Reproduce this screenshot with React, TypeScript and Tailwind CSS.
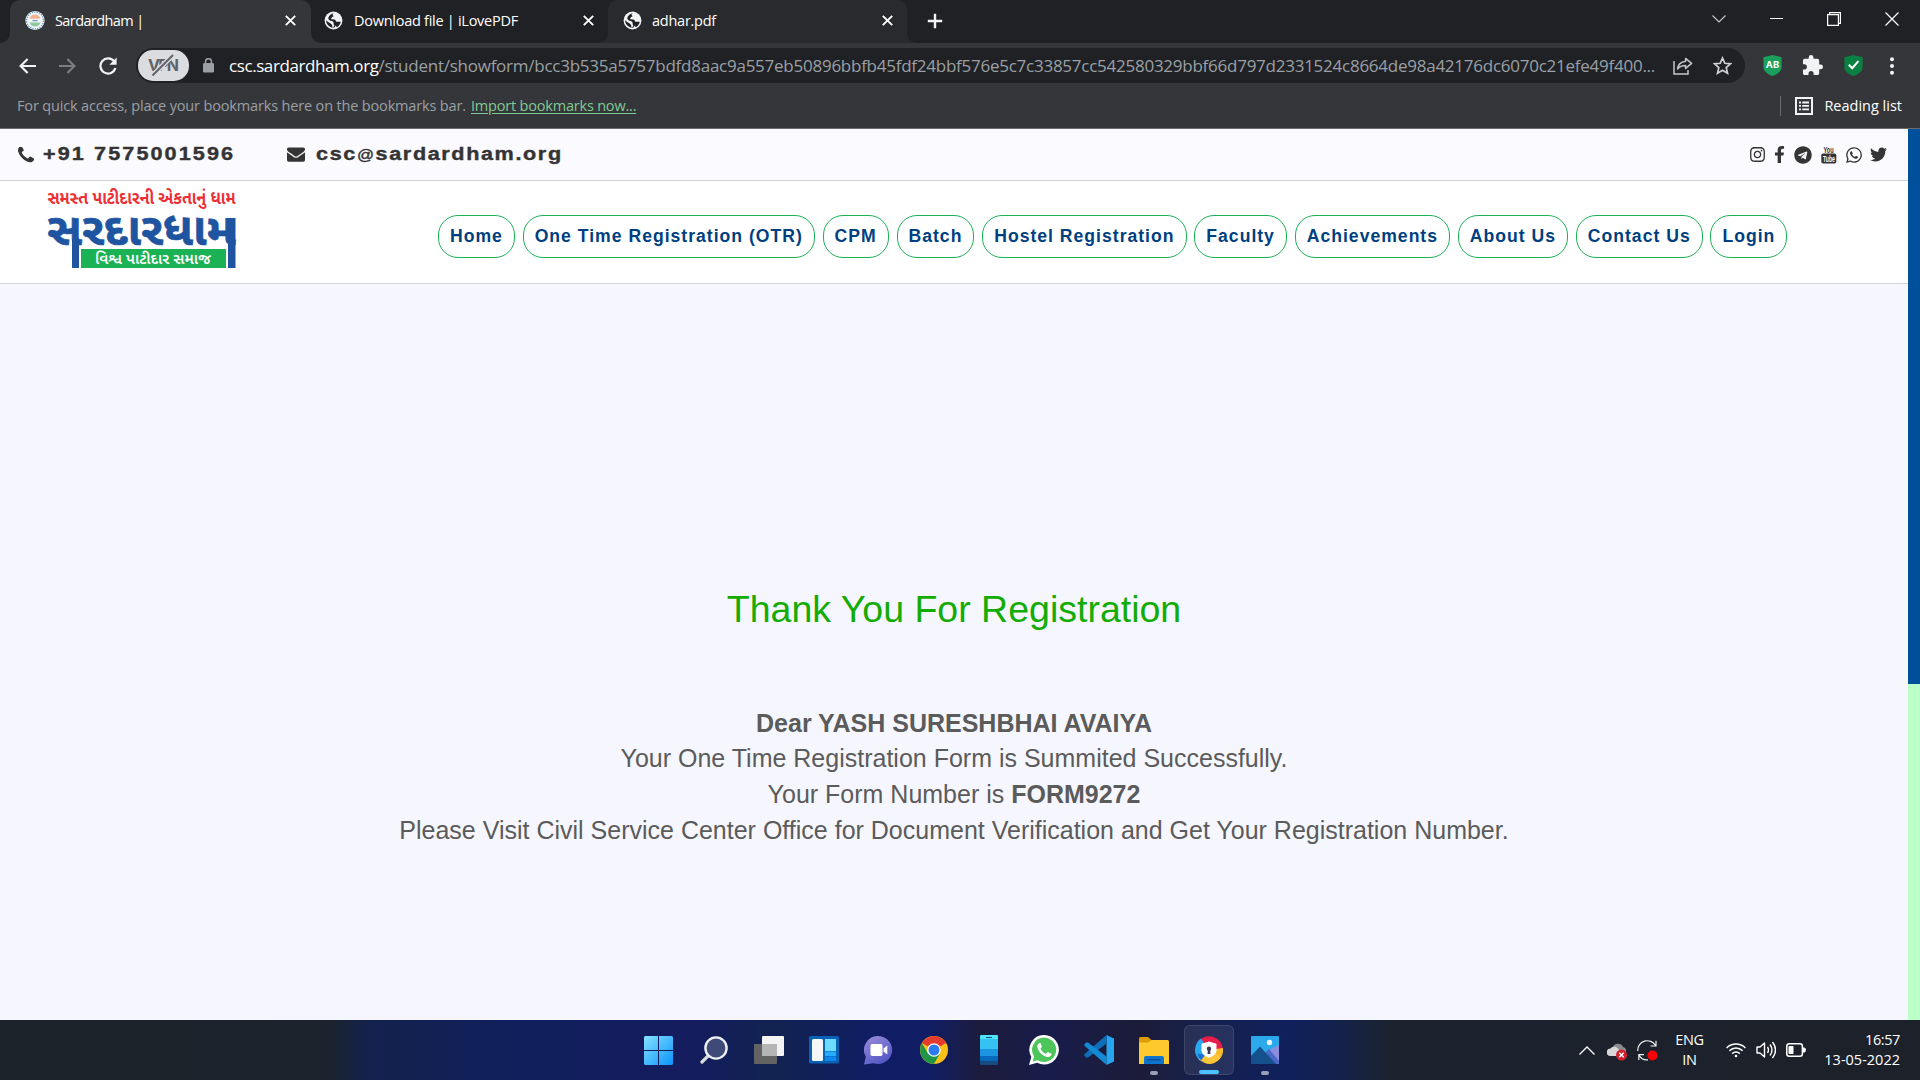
import type { ReactNode } from 'react';
import { FaFacebookF, FaInstagram, FaTelegram, FaTwitter, FaWhatsapp } from 'react-icons/fa';

function GlobeIcon() {
  return (
    <svg className="size-[19px] shrink-0" viewBox="0 0 20 20">
      <circle cx="10" cy="10" r="9.4" fill="#f1f3f4" />
      <path
        d="M10.6 2.2 C8.4 3.2 9 4.6 10.2 5.4 C8.4 6 7.4 7 7.6 8.6 L11 9 C12.4 9.3 12.4 11.2 13.8 11.8 C14.6 13.4 12.4 14.6 10.8 17.6 L9 17.8 C8.6 16 9 14.6 7.6 13.6 C5.8 12.4 3.6 11.4 2.2 9.8 C2.2 13 5 17.4 9.6 17.6 L10.8 15.4 C9.6 13.8 10.6 12.6 9.6 11.4 C8 10 5.4 10.4 4.6 8.4 C4.4 6.4 6 3.4 10.6 2.2 Z"
        fill="#202124"
      />
      <path d="M13.8 11.4 h3.8 c-.4 2.6-2 4.6-4 5.6 l-1.4-1.4z" fill="#202124" />
    </svg>
  );
}

function EmblemIcon() {
  return (
    <svg className="h-[21px] w-5 shrink-0" viewBox="0 0 20 20">
      <circle cx="10" cy="10" r="9.6" fill="#f4f8fa" />
      <circle cx="10" cy="10" r="8.4" fill="none" stroke="#6b9fc0" strokeWidth="1.3" strokeDasharray="1.4 1" />
      <path d="M4.600 8.200 a5.600 5.600 0 0 1 10.800 0z" fill="#f3b391" />
      <path d="M4.600 12 a5.600 5.600 0 0 0 10.800 0z" fill="#8fc79d" />
      <path d="M7.400 9.400h5.200v1.400H7.400z" fill="#7d98c4" />
    </svg>
  );
}

function CloseIcon() {
  return (
    <svg className="size-[11px] shrink-0" viewBox="0 0 11 11" stroke="#fff" strokeWidth="1.9">
      <path d="M.8.8l9.4 9.4M10.2.8L.8 10.2" />
    </svg>
  );
}

function TabStrip() {
  return (
    <div className="flex h-[43px] items-stretch bg-[#202124] text-[14.5px] text-white">
      <div className="w-[10px] shrink-0 bg-[#35363a]">
        <div className="h-full rounded-br-[10px] bg-[#202124]" />
      </div>
      <div className="flex w-[301px] items-center rounded-t-[10px] bg-[#35363a] pb-0.5 pl-[15px] pr-[15px]">
        <EmblemIcon />
        <span className="ml-[10px] grow tracking-[-0.6px]">Sardardham |</span>
        <CloseIcon />
      </div>
      <div className="w-[297px] shrink-0 bg-[linear-gradient(90deg,#35363a_50%,#292a2d_50%)]">
        <div className="flex h-full items-center rounded-b-[10px] bg-[#202124] pb-0.5 pl-[13px] pr-[14px]">
          <GlobeIcon />
          <span className="ml-[11px] grow tracking-[-0.27px]">Download file | iLovePDF</span>
          <CloseIcon />
        </div>
      </div>
      <div className="flex w-[299px] items-center rounded-t-[10px] bg-[#292a2d] pb-0.5 pl-[15px] pr-[14px]">
        <GlobeIcon />
        <span className="ml-[10px] grow tracking-[-0.25px]">adhar.pdf</span>
        <CloseIcon />
      </div>
      <div className="w-5 bg-[#292a2d]">
        <div className="h-full rounded-bl-[10px] bg-[#202124]" />
      </div>
      <svg className="mt-[13px] size-[16px] shrink-0" viewBox="0 0 16 16" stroke="#f1f3f4" strokeWidth="2.4">
        <path d="M8 .8v14.4M.8 8h14.4" />
      </svg>
      <div className="grow" />
      <div className="flex items-start gap-[44px] pr-[21.5px] pt-[12px]">
        <svg className="mt-[3px] h-2 w-[14px]" viewBox="0 0 14 8" fill="none" stroke="#c8c8c8" strokeWidth="1.1">
          <path d="M.5.5L7 7 13.5.5" />
        </svg>
        <svg className="h-[13px] w-[13px]" viewBox="0 0 13 13" stroke="#fff">
          <path d="M0 6.5h13" />
        </svg>
        <svg className="size-[14px]" viewBox="0 0 14 14" fill="none" stroke="#fff" strokeWidth="1.2">
          <path d="M.6 2.6h10.8v10.8H.6zM2.6 2.6V.6h10.8v10.8h-2" />
        </svg>
        <svg className="size-[14px]" viewBox="0 0 14 14" stroke="#fff" strokeWidth="1.2">
          <path d="M.5.5l13 13M13.5.5l-13 13" />
        </svg>
      </div>
    </div>
  );
}

function Toolbar() {
  return (
    <div className="flex h-[45px] items-center bg-[#35363a] pl-[19px] pr-[19px]">
      <svg className="h-4 w-[17px]" viewBox="0 0 17 16" fill="none" stroke="#f1f3f4" strokeWidth="2.1">
        <path d="M17 8H1.8M8.6 1L1.6 8l7 7" />
      </svg>
      <svg className="ml-[23px] h-4 w-[17px]" viewBox="0 0 17 16" fill="none" stroke="#7d7e81" strokeWidth="2.1">
        <path d="M0 8h15.2M8.4 1l7 7-7 7" />
      </svg>
      <svg className="ml-[23px] size-[18px]" viewBox="0 0 18 18">
        <path d="M15.2 4.4A7.6 7.6 0 1 0 16.4 11" fill="none" stroke="#f1f3f4" strokeWidth="2.2" />
        <path d="M17.6.6v7.2h-7.2z" fill="#f1f3f4" />
      </svg>
      <div className="ml-[19px] flex h-[35px] w-[1609px] items-center rounded-full bg-[#202124] pl-[2px] pr-[13px]">
        <svg className="h-[31px] w-[51px]" viewBox="0 0 51 31">
          <rect width="51" height="31" rx="15" fill="#dadce0" />
          <text x="10" y="21" fontFamily="Inter" fontWeight="700" fontSize="16" textLength="31" fill="#5f6368">VPN</text>
          <path d="M14.5 25.5L35 5" stroke="#dadce0" strokeWidth="5" />
          <path d="M14.5 25.5L35 5" stroke="#5f6368" strokeWidth="2" />
        </svg>
        <svg className="ml-[14px] h-[15px] w-[11px]" viewBox="0 0 11 15">
          <rect y="5" width="11" height="9.6" rx="1.4" fill="#9aa0a6" />
          <path d="M2.6 6V3.6a2.9 2.9 0 0 1 5.8 0V6" fill="none" stroke="#9aa0a6" strokeWidth="1.5" />
        </svg>
        <div className="ml-[15px] grow whitespace-nowrap text-[17px] leading-none">
          <span className="tracking-[-0.42px] text-white">csc.sardardham.org</span>
          <span className="tracking-[-0.25px] text-[#9aa0a6]">
            /student/showform/bcc3b535a5757bdfd8aac9a557eb50896bbfb45fdf24bbf576e5c7c33857cc542580329bbf66d797d2331524c8664de98a42176dc6070c21efe49f400...
          </span>
        </div>
        <svg className="h-[18px] w-5" viewBox="0 0 20 18" fill="none" stroke="#c4c7ca" strokeWidth="1.5">
          <path d="M1 4v13h14v-4" />
          <path d="M12.6 1.4l6 5-6 5V8.6c-3.6 0-6 .8-8 3.4.4-4 3.2-7.2 8-7.8z" strokeLinejoin="round" />
        </svg>
        <svg className="ml-[20px] size-[19px]" viewBox="0 0 19 19" fill="none" stroke="#d0d2d5" strokeWidth="1.7">
          <path d="M9.5 2l2.3 5.3 5.7.5-4.3 3.8 1.3 5.6-5-3-5 3 1.3-5.6L1.5 7.8l5.7-.5z" />
        </svg>
      </div>
      <svg className="ml-[18px] h-[21px] w-[19px]" viewBox="0 0 19 21">
        <path d="M9.5 0L18.6 2.2V12c0 5-6 8-9.1 9C6.4 20 .4 17 .4 12V2.2z" fill="#1a9f5c" />
        <text x="9.5" y="13" textAnchor="middle" fontFamily="Inter" fontWeight="700" fontSize="9.5" fill="#fff">AB</text>
      </svg>
      <svg className="ml-[20px] size-[21px]" viewBox="1 1 22 22" fill="#f1f3f4">
        <path d="M20.5 11H19V7c0-1.100-.9-2-2-2h-4V3.500a2.500 2.500 0 0 0-5 0V5H4c-1.100 0-1.990.9-1.990 2v3.800H3.500c1.490 0 2.700 1.210 2.700 2.700s-1.210 2.700-2.700 2.700H2V20c0 1.100.9 2 2 2h3.800v-1.500c0-1.490 1.210-2.700 2.700-2.700s2.700 1.210 2.700 2.700V22H17c1.100 0 2-.9 2-2v-4h1.500a2.500 2.500 0 0 0 0-5z" />
      </svg>
      <svg className="ml-[21px] h-[21px] w-[19px]" viewBox="0 0 19 21">
        <path d="M9.5 0L18.6 2.2V12c0 5-6 8-9.1 9C6.4 20 .4 17 .4 12V2.2z" fill="#0b8043" />
        <path d="M4.8 9.8l3.4 3.4 6.2-7" fill="none" stroke="#fff" strokeWidth="2" />
      </svg>
      <svg className="ml-auto h-[18px] w-[18px]" viewBox="0 0 18 18" fill="#f1f3f4">
        <circle cx="9" cy="2.2" r="2" />
        <circle cx="9" cy="9" r="2" />
        <circle cx="9" cy="15.8" r="2" />
      </svg>
    </div>
  );
}

function BookmarksBar() {
  return (
    <div className="flex h-[41px] items-center border-b border-[#6a6b6e] bg-[#35363a] pl-[17px] pr-[18px] text-[14.5px]">
      <span className="w-[454px] whitespace-nowrap pb-1 tracking-[-0.16px] text-[#9aa0a6]">
        For quick access, place your bookmarks here on the bookmarks bar.
      </span>
      <span className="pb-1 tracking-[-0.2px] text-[#81c995] underline underline-offset-2">Import bookmarks now...</span>
      <div className="mb-1 ml-auto h-5 w-px bg-[#6a6b6e]" />
      <svg className="mb-[5px] ml-[14px] size-[18px]" viewBox="0 0 18 18" fill="#f1f3f4">
        <path d="M1 1h16v16H1z" fill="none" stroke="#f1f3f4" strokeWidth="2" />
        <path d="M4 4.600h2v1.800H4zM7.200 4.600H14v1.800H7.200zM4 8h2v1.800H4zM7.200 8H14v1.800H7.200zM4 11.400h2v1.800H4zM7.200 11.400H14v1.800H7.200z" />
      </svg>
      <span className="ml-[11px] pb-1 text-white">Reading list</span>
    </div>
  );
}

function ContactBar() {
  return (
    <div className="flex h-[52px] items-center border-b border-[#d2d3d6] bg-[#fbfaff] pl-[18px] pr-[21px] text-[#343434]">
      <svg className="size-4" viewBox="192 192 1408 1408" fill="currentColor">
        <path d="M1600 1240q0 27-10 70.5t-21 68.5q-21 50-122 106-94 51-186 51-27 0-53-3.5t-57.5-12.5-47-14.5-55.5-20.5-49-18q-98-35-175-83-127-79-264-216t-216-264q-48-77-83-175-3-9-18-49t-20.5-55.500-14.500-47-12.500-57.500-3.500-53q0-92 51-186 56-101 106-122 25-11 68.500-21t70.500-10q14 0 21 3 18 6 53 76 11 19 30 54t35 63.500 31 53.500q3 4 17.500 25t21.500 35.500 7 28.500q0 20-28.500 50t-62 55-62 53-28.500 46q0 9 5 22.500t8.500 20.500 14 24 11.500 19q76 137 174 235t235 174q2 1 19 11.500t24 14 20.500 8.500 22.500 5q18 0 46-28.500t53-62 55-62 50-28.500q14 0 28.500 7t35.500 21.500 25 17.500q25 15 53.500 31t63.500 35 54 30q70 35 76 53 3 7 3 21z" />
      </svg>
      <div className="ml-[9px] w-[244px]">
        <span className="inline-block origin-left scale-x-[1.2] whitespace-nowrap text-[18px] font-bold tracking-[1.75px] [-webkit-text-stroke:0.4px_#343434]">
          +91 7575001596
        </span>
      </div>
      <svg className="mb-px size-[18px]" viewBox="0 0 1792 1792" fill="currentColor">
        <path d="M1792 710v794q0 66-47 113t-113 47h-1472q-66 0-113-47t-47-113v-794q44 49 101 87 362 246 497 345 57 42 92.500 65.500t94.500 48 110 24.500h2q51 0 110-24.500t94.500-48 92.500-65.500q170-123 498-345 57-39 100-87zm0-294q0 79-49 151t-122 123q-376 261-468 325-10 7-42.500 31t-54 38.500-52 32.500-57.500 27-50 9h-2q-23 0-50-9t-57.500-27-52-32.500-54-38.500-42.500-31q-91-64-262-182.500t-205-142.500q-62-42-117-115.500t-55-136.500q0-78 41.500-130t118.500-52h1472q65 0 112.500 47t47.500 113z" />
      </svg>
      <div className="ml-[11px] w-[250px]">
        <span className="inline-block origin-left scale-x-[1.2] whitespace-nowrap text-[18px] font-bold tracking-[1.35px] [-webkit-text-stroke:0.4px_#343434]">
          csc<span className="text-[14px] font-normal">@</span>sardardham.org
        </span>
      </div>
      <div className="ml-auto flex items-center">
        <FaInstagram className="size-[17px]" />
        <FaFacebookF className="ml-[5px] size-[17px]" />
        <FaTelegram className="ml-[6px] size-[18px]" />
        <svg className="ml-[9px] h-[19px] w-4 overflow-visible" viewBox="0 0 16 19">
          <text x="2.5" y="7.5" fontFamily="Liberation Sans" fontSize="9" fontWeight="700" textLength="10" lengthAdjust="spacingAndGlyphs" fill="#343434">You</text>
          <rect x=".3" y="8.4" width="15" height="10.2" rx="1.8" fill="#343434" />
          <text x="2" y="16.6" fontFamily="Liberation Sans" fontSize="8.5" fontWeight="700" textLength="12" lengthAdjust="spacingAndGlyphs" fill="#fbfaff">Tube</text>
        </svg>
        <FaWhatsapp className="ml-[8px] size-[18px]" />
        <FaTwitter className="ml-[7px] size-[17px]" />
      </div>
    </div>
  );
}

const gujarati = '"Noto Sans Gujarati", "Noto Sans", sans-serif';

function Logo() {
  return (
    <svg className="h-[86px] w-[192px] shrink-0 overflow-visible" viewBox="45 185 192 86">
      <g fontFamily={gujarati}>
        <text x="47.5" y="205" fontSize="18" fontWeight="700" textLength="188" lengthAdjust="spacingAndGlyphs" fill="#ee2f36">સમસ્ત પાટીદારની એકતાનું ધામ</text>
        <text x="47" y="245.5" fontSize="45" fontWeight="700" textLength="188.5" lengthAdjust="spacingAndGlyphs" fill="#1f55a0" stroke="#1f55a0" strokeWidth=".7">સરદારધામ</text>
        <path d="M72 240h7v29h-7zM228 219h7.500v50H228z" fill="#1f55a0" />
        <path d="M81 250h145v19H81z" fill="#1bb155" />
        <text x="95" y="265" fontSize="15" fontWeight="600" textLength="116" lengthAdjust="spacingAndGlyphs" fill="#fff">વિશ્વ પાટીદાર સમાજ</text>
      </g>
    </svg>
  );
}

const navItems = [
  'Home',
  'One Time Registration (OTR)',
  'CPM',
  'Batch',
  'Hostel Registration',
  'Faculty',
  'Achievements',
  'About Us',
  'Contact Us',
  'Login',
];

function SiteHeader() {
  return (
    <header className="flex h-[103px] items-start border-b border-[#d2d3d6] bg-white pl-[45px] pt-[3px]">
      <Logo />
      <nav className="ml-[201px] mt-[31px] flex gap-[7.8px]">
        {navItems.map((item) => (
          <a
            key={item}
            className="flex h-[43px] items-center whitespace-nowrap rounded-[20px] border border-[#1bb155] px-[11px] pb-[1px] text-[17.6px] font-bold tracking-[1px] text-[#003f80]"
          >
            {item}
          </a>
        ))}
      </nav>
    </header>
  );
}

function Confirmation() {
  return (
    <main className="flex grow flex-col items-center bg-[#f6f6ff] pt-[303px] text-[25px] leading-[35.8px] text-[#5b5b5b]">
      <h1 className="text-[37.5px] leading-[45px] text-[#13ac04]">Thank You For Registration</h1>
      <p className="mt-[73.6px] font-bold">Dear YASH SURESHBHAI AVAIYA</p>
      <p>Your One Time Registration Form is Summited Successfully.</p>
      <p>
        Your Form Number is <b>FORM9272</b>
      </p>
      <p>Please Visit Civil Service Center Office for Document Verification and Get Your Registration Number.</p>
    </main>
  );
}

function AppSlot({ children, running, active }: { children: ReactNode; running?: boolean; active?: boolean }) {
  return (
    <div
      className={
        active
          ? 'relative flex h-[50px] w-[50px] items-center justify-center rounded-md border border-white/10 bg-white/8'
          : 'relative flex h-[50px] w-[50px] items-center justify-center'
      }
    >
      {children}
      {running && <span className="absolute bottom-0 h-1 w-2 rounded-full bg-[#9a9fb3]" />}
      {active && <span className="absolute bottom-0 h-1 w-5 rounded-full bg-[#4cc2ff]" />}
    </div>
  );
}

function TaskbarApps() {
  return (
    <div className="flex gap-[5.1px] pt-[5px]">
      <AppSlot>
        <svg className="size-[29px]" viewBox="0 0 29 29">
          <defs>
            <linearGradient id="win" x1="0" y1="0" x2="1" y2="1">
              <stop stopColor="#86e2ff" />
              <stop offset="1" stopColor="#0a93fb" />
            </linearGradient>
          </defs>
          <path d="M1 0h13v14H0V1zM15 0h13l1 1v13H15zM0 15h14v14H1l-1-1zM15 15h14v13l-1 1H15z" fill="url(#win)" />
        </svg>
      </AppSlot>
      <AppSlot>
        <svg className="size-[28px]" viewBox="0 0 28 28">
          <path d="M2 26l8-8" stroke="#d8dade" strokeWidth="3.2" strokeLinecap="round" />
          <circle cx="16" cy="12" r="10.6" fill="#404a78" stroke="#eef0f3" strokeWidth="2.4" />
        </svg>
      </AppSlot>
      <AppSlot>
        <svg className="h-7 w-[30px]" viewBox="0 0 30 28">
          <rect x="8" y="0" width="22" height="20" rx="1" fill="#f4f4f4" />
          <rect x="0" y="8" width="23" height="20" rx="1" fill="#636363" />
          <path d="M8 8h15v12H8z" fill="#b5b5b5" />
        </svg>
      </AppSlot>
      <AppSlot>
        <svg className="h-7 w-[30px]" viewBox="0 0 30 28">
          <rect width="30" height="27.5" rx="1.5" fill="#0b62b5" />
          <rect x="3" y="3" width="11" height="22" rx="1.5" fill="#f6f6f6" />
          <path d="M16 3h11v12H16z" fill="#6bdcff" />
          <path d="M16 15.500h11v4.500H16z" fill="#26acff" />
          <path d="M16 20.500h11V25H16z" fill="#0d86ee" />
        </svg>
      </AppSlot>
      <AppSlot>
        <svg className="size-[29px]" viewBox="0 0 29 29">
          <defs>
            <linearGradient id="chat" x1="0" y1="0" x2=".6" y2="1">
              <stop stopColor="#9a8fd8" />
              <stop offset="1" stopColor="#5457c8" />
            </linearGradient>
          </defs>
          <path d="M14.500 0a14 14 0 1 1-5 27.200L0 28.500l1.800-7.700A14 14 0 0 1 14.500 0z" fill="url(#chat)" />
          <rect x="6.5" y="8" width="12" height="12" rx="1.8" fill="#fff" />
          <path d="M19.500 12.500l3.800-3v9l-3.800-3z" fill="#fff" />
        </svg>
      </AppSlot>
      <AppSlot>
        <svg className="size-7" viewBox="0 0 28 28">
          <circle cx="14" cy="14" r="14" fill="#fbc116" />
          <path d="M14 14L1.900 7A14 14 0 0 1 26.100 7z" fill="#e53b2e" />
          <path d="M14 7h12.100L20 7z" fill="#e53b2e" />
          <path d="M1.900 7A14 14 0 0 0 14 28l6.100-10.500L14 14 8 17.500z" fill="#1f9647" />
          <circle cx="14" cy="14" r="6.8" fill="#fff" />
          <circle cx="14" cy="14" r="5.5" fill="#2a7cf0" />
        </svg>
      </AppSlot>
      <AppSlot>
        <svg className="h-[30px] w-[18px]" viewBox="0 0 18 30">
          <rect width="18" height="30" rx="1.2" fill="#174b80" />
          <path d="M0 1.200Q0 0 1.200 0h15.600Q18 0 18 1.200V4H0z" fill="#4de5fb" />
          <path d="M0 4h18v10H0z" fill="#35c1f1" />
          <path d="M0 14h18v7H0z" fill="#1b95e0" />
          <path d="M0 21h18v5H0z" fill="#0669bc" />
          <path d="M6 2.500h6" stroke="#174b80" />
        </svg>
      </AppSlot>
      <AppSlot>
        <svg className="size-[30px]" viewBox="0 0 30 30">
          <path d="M15.300 0a14.700 14.700 0 1 1-7 27.700L0 30l2.300-8A14.700 14.700 0 0 1 15.300 0z" fill="#fff" />
          <path d="M15.300 2.500a12.200 12.200 0 1 1-6.500 22.700L3.800 26.400l1.300-5A12.200 12.200 0 0 1 15.300 2.500z" fill="#4cc65a" />
          <path d="M10.600 8c-.9.200-2.600 1.800-2.200 4.300.7 4.200 5.800 9.600 10.600 9.700 2 0 3.400-1.400 3.600-3.200l-3.700-1.900-1.900 1.900c-2.600-.9-4.700-3-5.500-5.300l1.400-1.800L11.500 8z" fill="#fff" />
        </svg>
      </AppSlot>
      <AppSlot>
        <svg className="size-[30px]" viewBox="0 0 30 30">
          <path d="M22.500 0L30 3.500v23L22.500 30z" fill="#27a5ee" />
          <path d="M22.500 0v8.500L4 22.600 2.600 22.800.4 20.800v-1.600z" fill="#0d6fb8" />
          <path d="M22.500 30v-8.500L4 7.400 2.600 7.200.4 9.200v1.600z" fill="#1489d4" />
        </svg>
      </AppSlot>
      <AppSlot running>
        <svg className="h-[27px] w-[30px]" viewBox="0 0 30 27">
          <path d="M0 1.500Q0 0 1.500 0H9l4 3.500V7H0z" fill="#dd9b07" />
          <path d="M0 5.500h9L12.500 3H28.500Q30 3 30 4.500V27H0z" fill="#fdc92f" />
          <path d="M5 27v-6q0-2 2-2h16q2 0 2 2v6z" fill="#0d74cf" />
          <path d="M8.500 22.700h13" stroke="#0a4a8c" strokeWidth="1.2" />
        </svg>
      </AppSlot>
      <AppSlot active>
        <svg className="size-7" viewBox="0 0 28 28">
          <path d="M14 14L2 7A14 14 0 0 1 28 14z" fill="#ea1c4a" />
          <path d="M14 14L6 2.500A14 14 0 0 0 5 24.700z" fill="#27a8f0" />
          <path d="M14 14L28 12A14 14 0 0 1 3.500 23z" fill="#fbbc2c" />
          <path d="M2.500 17.500A14 14 0 0 0 9 27L12 19z" fill="#1d6fd8" />
          <path d="M14 14L6 24.500A14 14 0 0 0 26 21z" fill="#fdc63a" />
          <path d="M14 5.500l7.500 2.300v6.400c0 4.300-4.500 6.400-7.500 7.600-3-1.200-7.500-3.300-7.500-7.600V7.800z" fill="#fff" />
          <circle cx="14" cy="12.8" r="2.2" fill="#343b55" />
          <path d="M13 13h2l.5 5h-3z" fill="#343b55" />
        </svg>
      </AppSlot>
      <AppSlot running>
        <svg className="size-7" viewBox="0 0 28 28">
          <rect width="28" height="28" rx="1" fill="#2ba9ea" />
          <path d="M28 9v18L15 16.500 20 13z" fill="#8c8ddd" />
          <path d="M14 17l4-4 10 12v3H22z" fill="#4869c8" />
          <path d="M0 20L9 10.500 25 28H0z" fill="#14508c" />
          <circle cx="18.5" cy="6.5" r="2.7" fill="#e8f4fd" />
        </svg>
      </AppSlot>
    </div>
  );
}

function SystemTray() {
  return (
    <div className="ml-auto flex items-center pr-[20px] text-[14.5px] leading-5 text-white">
      <svg className="h-[9px] w-4" viewBox="0 0 16 9" fill="none" stroke="#fff" strokeWidth="1.3">
        <path d="M.5 8.500L8 1l7.500 7.500" />
      </svg>
      <svg className="ml-[12px] mt-[3px] h-[18px] w-5" viewBox="0 0 20 18">
        <path d="M5.500 5.500A5.500 5.500 0 0 1 16 4a4 4 0 0 1-2 8H6z" fill="#8b8b8d" />
        <path d="M3.500 13a3.500 3.500 0 0 1 0-7.500A5 5 0 0 1 12 7l1 6z" fill="#d8d8da" />
        <circle cx="14.5" cy="12" r="5.5" fill="#d3202f" />
        <path d="M12.300 9.800l4.400 4.400M16.700 9.800l-4.400 4.400" stroke="#fff" strokeWidth="1.4" />
      </svg>
      <svg className="ml-[10px] size-[21px]" viewBox="0 0 21 21" fill="none" stroke="#f0f0f0" strokeWidth="1.2">
        <path d="M.8 11A9.500 9.500 0 0 1 18.500 5.500M19 .8v5.200h-5.500M11 19.800A9 9 0 0 1 2 15M7 14.600H1.800V20" />
        <circle cx="15.5" cy="15.5" r="5" fill="#fb0007" stroke="none" />
      </svg>
      <div className="ml-[16px] w-[31px] text-center tracking-[-0.3px]">
        <div>ENG</div>
        <div>IN</div>
      </div>
      <svg className="ml-[21px] h-4 w-5" viewBox="0 0 20 16" fill="none" stroke="#fff" strokeWidth="1.5">
        <path d="M.6 6a13.300 13.300 0 0 1 18.800 0M3.400 8.800a9.300 9.300 0 0 1 13.200 0M6.200 11.600a5.400 5.400 0 0 1 7.600 0" />
        <circle cx="10" cy="14" r="1.3" fill="#fff" stroke="none" />
      </svg>
      <svg className="ml-[10px] h-[18px] w-5" viewBox="0 0 20 18" fill="none" stroke="#fff" strokeWidth="1.4">
        <path d="M1 6h3l4.500-4v14L4 12H1z" strokeLinejoin="round" />
        <path d="M11.500 6q2 3 0 6M14 3.500q4 5.500 0 11M16.500 1q6 8 0 16" />
      </svg>
      <svg className="ml-[10px] h-[14px] w-5" viewBox="0 0 20 14">
        <rect x=".8" y=".8" width="15.6" height="12.4" rx="2.5" fill="none" stroke="#fff" strokeWidth="1.5" />
        <rect x="2.5" y="3" width="5" height="8" rx=".8" fill="#fff" />
        <path d="M17 4.500h1.500l1.300 1.300v2.400l-1.300 1.300H17z" fill="#fff" />
      </svg>
      <div className="ml-[17px] w-[77px] whitespace-nowrap text-right">
        <div className="tracking-[-0.4px]">16:57</div>
        <div>13-05-2022</div>
      </div>
    </div>
  );
}

export default function App() {
  return (
    <div className="flex h-[1080px] w-[1920px] flex-col overflow-hidden font-['Open_Sans',sans-serif]">
      <TabStrip />
      <Toolbar />
      <BookmarksBar />
      <div className="flex grow">
        <div className="flex w-[1908px] flex-col font-['Liberation_Sans',Arial,sans-serif]">
          <ContactBar />
          <SiteHeader />
          <Confirmation />
        </div>
        <div className="w-3 bg-[#bbffc9]">
          <div className="h-[555px] bg-[#004f9b]" />
        </div>
      </div>
      <footer className="flex h-[60px] bg-[linear-gradient(90deg,#1c2229_0px,#1b232d_330px,#14224e_370px,#101f5c_520px,#141c5e_690px,#122351_770px,#101d64_880px,#101d64_930px,#1c1c3d_980px,#181c4a_1050px,#1c1c38_1140px,#16204c_1200px,#0f205c_1290px,#14224b_1340px,#1b222e_1390px,#1d2129_1920px)] pl-[633.5px]">
        <TaskbarApps />
        <SystemTray />
      </footer>
    </div>
  );
}
